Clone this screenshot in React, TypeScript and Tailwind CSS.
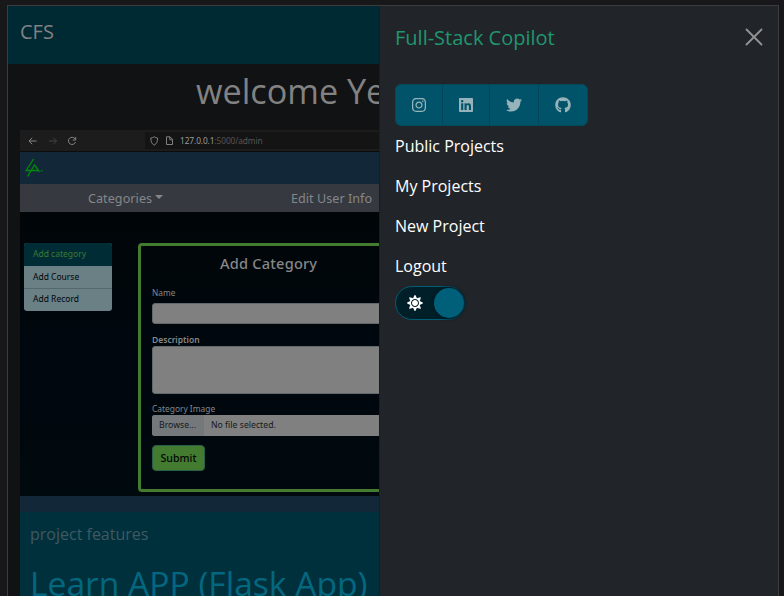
import React from "react";
import { FaInstagram, FaLinkedin, FaTwitter, FaGithub, FaSun } from "react-icons/fa";

const links = ["Public Projects", "My Projects", "New Project", "Logout"];

function BrowserBar() {
  return (
    <div className="flex h-[22px] border-b border-[#0c0c0d] bg-[#1c1c1d]">
      <svg className="h-[21px] w-[125px] shrink-0" viewBox="0 0 125 21" fill="none" stroke="#858585" strokeWidth="1">
        <path d="M9 11h7.500M12.200 7.800L9 11l3.200 3.200" />
        <path d="M29 11h7.500M33.300 7.800l3.200 3.200-3.200 3.200" stroke="#444" />
        <path d="M55 8.800a3.600 3.600 0 1 0 .5 3.200M55.700 7v3h-3" />
      </svg>
      <div className="mt-[2px] flex h-[17px] w-[240px] shrink-0 items-center bg-[#141415] text-[8.300px] leading-[18px] text-[#555]">
        <svg className="h-[17px] w-[35px] shrink-0" viewBox="0 0 35 17" fill="none" stroke="#808080" strokeWidth="1">
          <path d="M9.200 4.800c-1 .8-2.200 1-3.400 1.200 0 3.600.8 5.600 3.400 7.200 2.600-1.600 3.400-3.600 3.400-7.200-1.200-.2-2.400-.4-3.400-1.200z" />
          <path d="M21.500 4.800h3.500l2.500 2.500v5.200h-6zM24.800 5v2.800h2.700" />
        </svg>
        <span className="pt-px tracking-[-0.080px] text-[#999]">127.0.0.1</span>
        <span className="pt-px tracking-[-0.080px]">:5000/admin</span>
      </div>
    </div>
  );
}

function AdminPreview() {
  return (
    <div className="h-[382px] w-[480px] bg-[#122838] font-['Noto_Sans',sans-serif]">
      <BrowserBar />
      <div className="h-8 bg-[#122838]">
        <svg className="h-8 w-8" viewBox="0 0 32 32" fill="none" stroke="#008a0b" strokeWidth="1.300">
          <path d="M13.500 7L6.200 18.500h12.500L14.500 13 7.500 24.500" />
          <path d="M17.500 19.500l1-1 1 1.500 1.500-1.500 2 .5" strokeWidth="1" opacity=".7" />
        </svg>
      </div>
      <div className="flex h-7 bg-[#36393f] text-[12.600px] leading-[29px] text-[#85878a]">
        <div className="flex w-[271px] shrink-0 pl-[68px]">
          <span className="w-[66px] tracking-[0.050px]">Categories</span>
          <span className="ml-px mt-[11px] h-0 w-0 border-x-[4px] border-t-[4px] border-x-transparent border-t-[#85878a]" />
        </div>
        <span className="tracking-[0.030px]">Edit User Info</span>
      </div>
      <div className="flex h-[284px] items-start bg-gradient-to-b from-[#000608] via-[#00070e] to-[#00090e] pl-1 pt-[31px]">
        <div className="w-[88px] shrink-0 overflow-hidden rounded-[3px] bg-[#6b8085] text-[8.500px] text-[#000508]">
          <div className="h-[23px] bg-[#002d35] pl-[9px] leading-[22px] text-[#3d7932]">Add category</div>
          <div className="h-[22px] pl-[9px] leading-[22px]">Add Course</div>
          <div className="h-[23px] border-t border-[#53696e] pl-[9px] leading-[20px]">Add Record</div>
        </div>
        <div className="ml-[26px] h-[249px] w-[330px] shrink-0 rounded border-[3px] border-[#437b30] pl-[11px] text-[#858789]">
          <div className="h-[38px] pl-[68px] pt-[6px] text-[14.600px] font-medium leading-[23px] tracking-[0.200px]">Add Category</div>
          <div className="h-[19px] text-[8.300px] leading-[18px]">Name</div>
          <div className="h-[21px] rounded-[3px] border border-[#62696b] bg-[#808080]" />
          <div className="mt-[9px] h-[13px] text-[8.500px] font-semibold leading-[13px]">Description</div>
          <div className="h-12 rounded-[3px] border border-[#62696b] bg-[#808080]" />
          <div className="mt-2 h-[13px] text-[8.400px] leading-[13px]">Category Image</div>
          <div className="flex h-[21px] overflow-hidden rounded-[3px] bg-[#808080] text-[8.700px] leading-[21px] text-[#15191c]">
            <span className="w-[52px] bg-[#75787b] pl-[7px]">Browse...</span>
            <span className="pl-[7px]">No file selected.</span>
          </div>
          <div className="mt-[9px] flex h-[26px] w-[53px] justify-center rounded border border-[#285f4b] bg-[#437b30] text-[10.600px] font-medium leading-[25px] text-[#020705]">Submit</div>
        </div>
      </div>
    </div>
  );
}

function Page() {
  return (
    <div className="w-[371px] shrink-0 overflow-hidden whitespace-nowrap bg-[#111214]">
      <div className="h-[58px] bg-[#002a33] pl-3 pt-[11px] text-[20px] leading-[30px] text-[#808284]">CFS</div>
      <div className="h-[66px] pl-[188px] pt-[2px] text-[34.200px] leading-[50px] text-[#828282]">welcome Ye</div>
      <div className="ml-3">
        <AdminPreview />
        <div className="h-[85px] bg-[#01303d] pl-[10px] pt-[10px]">
          <div className="h-6 text-[16px] leading-6 text-[#3f5960]">project features</div>
          <div className="mt-[13px] text-[33.600px] leading-[48px] text-[#046780]">Learn APP (Flask App)</div>
        </div>
      </div>
    </div>
  );
}

function SidePanel() {
  return (
    <div className="flex-1 border-l border-[#1a1d20] bg-[#212529] pl-[15px] pr-[15px]">
      <div className="flex h-[78px] justify-between pt-[17px]">
        <h1 className="text-[20px] leading-[30px] text-[#20966f]">Full-Stack Copilot</h1>
        <svg className="mt-[5px] h-[18px] w-[18px]" viewBox="0 0 18 18" fill="none" stroke="#909294" strokeWidth="1.900" strokeLinecap="round">
          <path d="M1.500 1.500l15 15M16.500 1.500l-15 15" />
        </svg>
      </div>
      <div className="flex h-[42px] w-[193px] overflow-hidden rounded-md border border-[#004a5b] bg-[#005368] text-base text-[#96b3bb]">
        <div className="flex w-[47px] items-center justify-center border-r border-[#004658]"><FaInstagram /></div>
        <div className="flex w-[47px] items-center justify-center border-r border-[#004658]"><FaLinkedin /></div>
        <div className="flex w-[49px] items-center justify-center border-r border-[#004658]"><FaTwitter /></div>
        <div className="flex w-[48px] items-center justify-center"><FaGithub /></div>
      </div>
      <nav className="text-base text-white">
        {links.map((l) => <div key={l} className="h-10 leading-10">{l}</div>)}
      </nav>
      <div className="flex h-[34px] w-[70px] items-center justify-between rounded-full border border-[#005d75] bg-[#001f28] pl-[11px]">
        <FaSun className="h-4 w-4 text-white" />
        <div className="h-[30px] w-[30px] rounded-full bg-[#00607a] shadow-[0_0_3px_1px_#001923]" />
      </div>
    </div>
  );
}

export default function App() {
  return (
    <div className="h-[596px] w-[784px] overflow-hidden bg-[#18181a] pl-[7px] pt-[5px] font-['Open_Sans','Noto_Sans',sans-serif]">
      <div className="flex h-[591px] w-[772px] overflow-hidden border border-b-0 border-[#3c3c3d]">
        <Page />
        <SidePanel />
      </div>
    </div>
  );
}
